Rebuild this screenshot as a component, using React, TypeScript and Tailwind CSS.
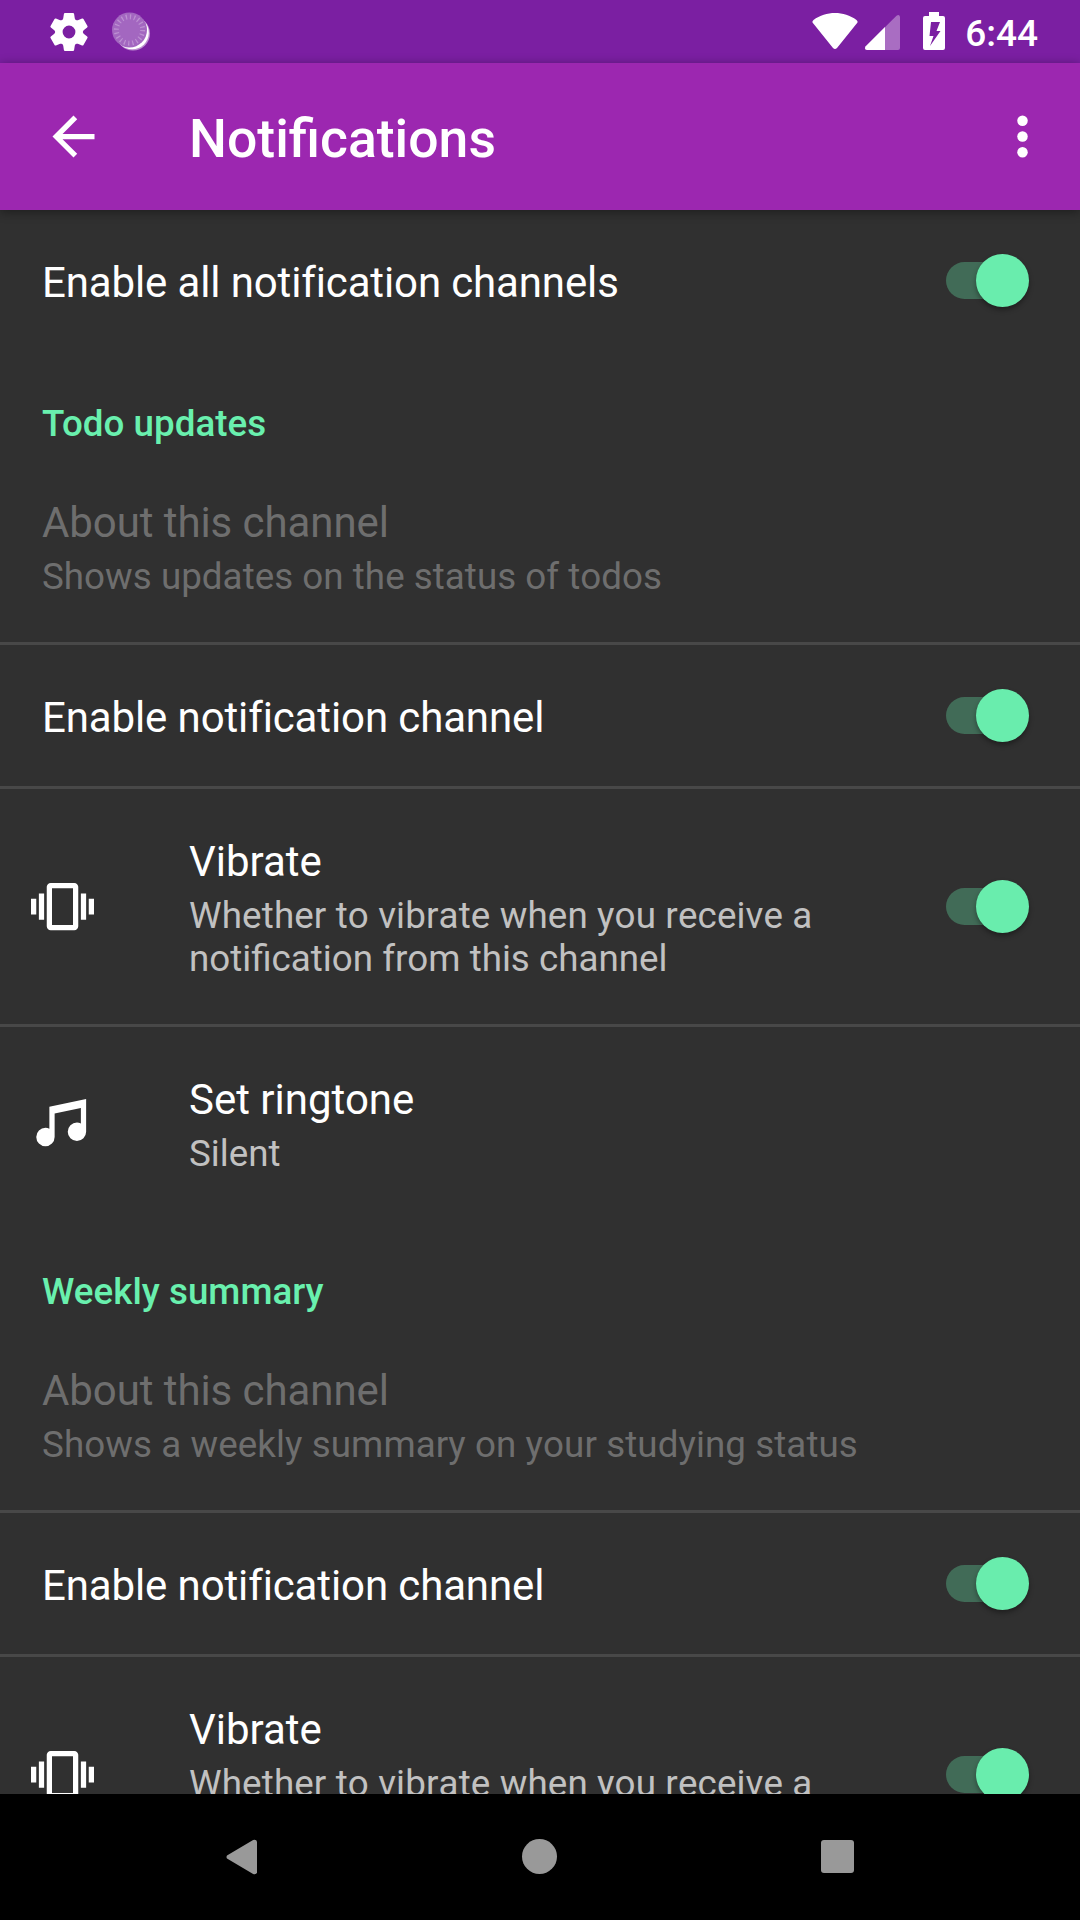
import React from "react";

const Toggle = () => (
  <div className="relative mr-[51px] ml-auto flex h-[53px] w-[83px] shrink-0 items-center">
    <div className="h-[37px] w-[80px] rounded-full bg-[#416b57]" />
    <div className="absolute top-0 right-0 size-[53px] rounded-full bg-[#69edad] shadow-[0_3px_5px_rgba(0,0,0,0.35)]" />
  </div>
);

const Divider = () => <div className="h-[3px] shrink-0 bg-[#484848]" />;

const Category = ({ children }: { children: string }) => (
  <h2 className="h-[99px] shrink-0 pt-[51px] pl-[42px] text-[36.75px] leading-[43px] font-medium tracking-[0.02px] text-[#69f0ae]">
    {children}
  </h2>
);

type SummaryLine = { text: string; tracking?: string };

type RowProps = {
  title: string;
  titleTracking?: string;
  summary?: SummaryLine[];
  icon?: React.ReactNode;
  toggle?: boolean;
  disabled?: boolean;
};

const Row = ({ title, titleTracking = "", summary, icon, toggle, disabled }: RowProps) => (
  <div className="flex shrink-0 items-center">
    {icon && <div className="w-[147px] shrink-0 pl-[31px]">{icon}</div>}
    <div className={`py-[42px] pl-[42px] ${disabled ? "text-[#6e6e6e]" : "text-white"}`}>
      <div className={`h-[57px] pt-[6px] text-[42px] leading-[49px] whitespace-nowrap [font-variant-ligatures:common-ligatures] ${titleTracking}`}>
        {title}
      </div>
      {summary && (
        <div className={`pt-[6px] pb-[2px] text-[36.75px] leading-[43px] whitespace-nowrap [font-kerning:none] [font-variant-ligatures:common-ligatures] ${disabled ? "" : "text-[#c1c1c1]"}`}>
          {summary.map(({ text, tracking = "" }) => (
            <div key={text} className={tracking}>
              {text}
            </div>
          ))}
        </div>
      )}
    </div>
    {toggle && <Toggle />}
  </div>
);

const VibrateIcon = () => (
  <svg className="size-[63px]" viewBox="0 0 24 24" fill="white">
    <path d="M0 15h2V9H0v6zm3 2h2V7H3v10zm19-8v6h2V9h-2zm-3 8h2V7h-2v10zM16.5 3h-9C6.67 3 6 3.67 6 4.5v15c0 .83.67 1.5 1.5 1.5h9c.83 0 1.5-.67 1.5-1.5v-15c0-.83-.67-1.5-1.5-1.5zM16 19H8V5h8v14z" />
  </svg>
);

const MusicIcon = () => (
  <svg className="mb-[2px] size-[63px]" viewBox="0 0 24 24" fill="white">
    <path d="M21 3v12.5a3.5 3.5 0 1 1-7 0 3.5 3.5 0 0 1 3.5-3.5c.54 0 1.05.12 1.5.34V6.47L9 8.6v8.9A3.5 3.5 0 1 1 5.5 14c.54 0 1.05.12 1.5.34V6l14-3z" />
  </svg>
);

const GEAR_ANGLES = [0, 60, 120, 180, 240, 300];

const GearIcon = () => (
  <svg className="size-[46px]" viewBox="-23 -23 46 46">
    <circle r="10" fill="none" stroke="white" strokeWidth="7.2" />
    {GEAR_ANGLES.map((angle) => (
      <path
        key={angle}
        transform={`rotate(${angle})`}
        fill="white"
        d="M-7.200 -11 L-5.800 -13.600 L-5.100 -18 Q-5 -19 -4 -19 H4 Q5 -19 5.100 -18 L5.800 -13.600 L7.200 -11 L4 -9 H-4z"
      />
    ))}
  </svg>
);

const SpinnerIcon = () => (
  <svg className="h-[40px] w-[40px]" viewBox="0 0 40 40">
    <circle cx="22" cy="21.5" r="17" fill="white" fillOpacity="0.5" />
    <circle cx="21.2" cy="20.7" r="16.6" fill="white" />
    <circle cx="18.5" cy="18" r="17.5" fill="#a367c0" />
    <circle cx="18.5" cy="18" r="13.2" fill="none" stroke="#bd90d2" strokeWidth="5" strokeDasharray="1.25 2.897" />
  </svg>
);

const StatusBar = () => (
  <header className="flex h-[63px] shrink-0 items-center bg-[#7b1fa2]">
    <div className="flex items-center pl-[45.5px]">
      <GearIcon />
      <div className="pl-[19.5px]">
        <SpinnerIcon />
      </div>
    </div>
    <div className="ml-auto flex items-center pr-[42px]">
      <svg className="h-[63px] w-[140px]" viewBox="0 0 140 63" fill="white">
        <path d="M30 49 Q29 49 28 48 L7.500 22.500 Q7 21 8.500 20 C21 10.700 39 10.700 51.500 20 Q53 21 52.500 22.500 L32 48 Q31 49 30 49z" />
        <path fillOpacity="0.35" d="M61 50 Q59 49 60.500 46.500 L91.500 15.700 Q94.500 14 95 17 V48 Q95 50 93 50z" />
        <path d="M62 50 Q59 49 60.500 46.500 L80 27 V50z" />
        <path fillRule="evenodd" d="M124 12h10v4h4q2 0 2 2v30q0 2-2 2h-18q-2 0-2-2V18q0-2 2-2h4zM126 22l-1.500 14h4l-3.500 10 10.500-15h-4l3.500-9z" />
      </svg>
      <span className="pt-[3px] pl-[20px] text-[37px] leading-[43px] font-medium text-white">6:44</span>
    </div>
  </header>
);

const Toolbar = () => (
  <div className="z-10 flex h-[147px] shrink-0 items-center bg-[#9c27b0] text-white shadow-[0_2px_10px_rgba(0,0,0,0.4)]">
    <svg className="ml-[42px] size-[63px]" viewBox="0 0 24 24" fill="currentColor">
      <path d="M20 11H7.830l5.590-5.590L12 4l-8 8 8 8 1.410-1.410L7.830 13H20v-2z" />
    </svg>
    <h1 className="pt-[5px] pl-[84px] text-[53.5px] leading-[62px] font-medium">Notifications</h1>
    <svg className="mr-[26px] ml-auto size-[63px]" viewBox="0 0 24 24" fill="currentColor">
      <circle cx="12" cy="6" r="2" />
      <circle cx="12" cy="12" r="2" />
      <circle cx="12" cy="18" r="2" />
    </svg>
  </div>
);

const NavBar = () => (
  <nav className="grid h-[126px] shrink-0 grid-cols-[298px_298px_298px] items-center justify-center justify-items-center bg-black pr-[2px] pb-[1px]">
    <svg className="h-[36px] w-[31px]" viewBox="0 0 32 38" preserveAspectRatio="none" fill="#999">
      <path d="M1 20.500 Q0 19 1 17.500 L28 1 Q31.500 0 32 3 V35 Q31.500 38 28 37z" />
    </svg>
    <div className="size-[35px] rounded-full bg-[#999]" />
    <div className="size-[33px] rounded-[3px] bg-[#999]" />
  </nav>
);

const vibrateSummary: SummaryLine[] = [
  { text: "Whether to vibrate when you receive a", tracking: "tracking-[0.13px]" },
  { text: "notification from this channel" },
];

export default function App() {
  return (
    <div className="flex h-[1920px] w-[1080px] flex-col overflow-hidden bg-[#303030] font-['Roboto',sans-serif]">
      <StatusBar />
      <Toolbar />
      <main className="flex min-h-0 flex-1 flex-col overflow-hidden">
        <Row title="Enable all notification channels" titleTracking="tracking-[-0.13px]" toggle />
        <Category>Todo updates</Category>
        <Row
          title="About this channel"
          titleTracking="tracking-[-0.08px]"
          summary={[{ text: "Shows updates on the status of todos", tracking: "tracking-[0.03px]" }]}
          disabled
        />
        <Divider />
        <Row title="Enable notification channel" titleTracking="tracking-[-0.12px]" toggle />
        <Divider />
        <Row title="Vibrate" summary={vibrateSummary} icon={<VibrateIcon />} toggle />
        <Divider />
        <Row title="Set ringtone" summary={[{ text: "Silent" }]} icon={<MusicIcon />} />
        <Category>Weekly summary</Category>
        <Row
          title="About this channel"
          titleTracking="tracking-[-0.08px]"
          summary={[{ text: "Shows a weekly summary on your studying status", tracking: "tracking-[0.08px]" }]}
          disabled
        />
        <Divider />
        <Row title="Enable notification channel" titleTracking="tracking-[-0.12px]" toggle />
        <Divider />
        <Row title="Vibrate" summary={vibrateSummary} icon={<VibrateIcon />} toggle />
      </main>
      <NavBar />
    </div>
  );
}
